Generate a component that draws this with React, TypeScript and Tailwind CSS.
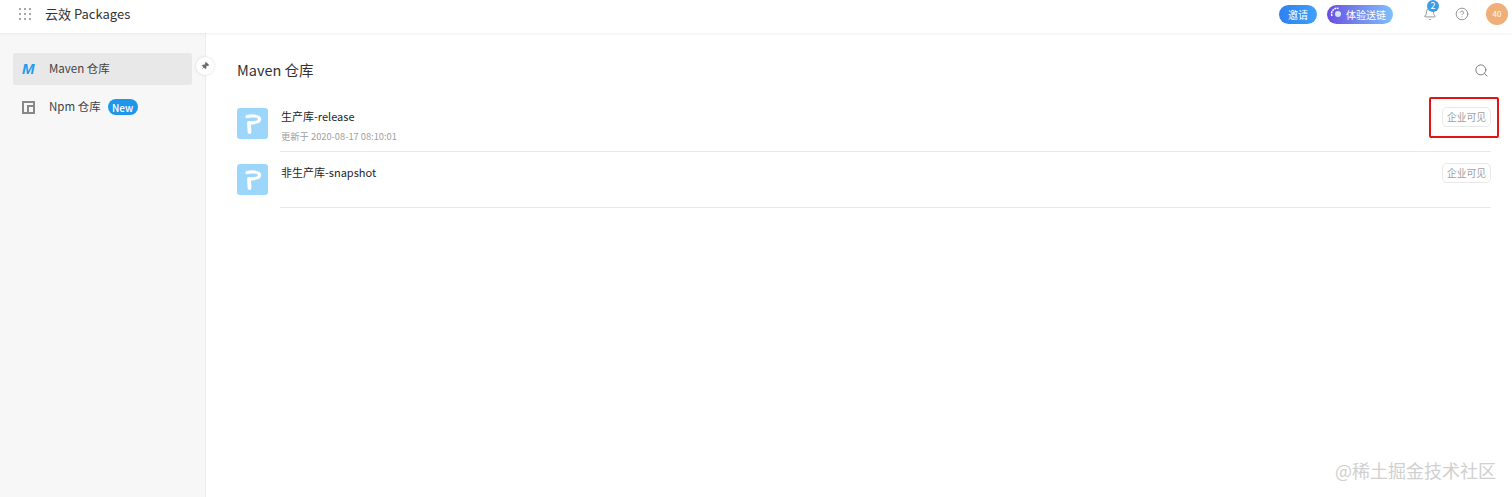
import React from "react";
import { Search, Pin, Bell, CircleHelp } from "lucide-react";

const FONT = '"Noto Sans CJK SC", "Noto Sans", sans-serif';

const RepoLogo = () => (
  <div className="w-[31px] h-[31px] rounded-[3px] bg-[#9dd6fb] flex-shrink-0">
    <svg width="31" height="31" viewBox="0 0 31 31" fill="none">
      <path d="M10 8.500c4-1 11.500-1 12.500 2c.6 3-4 4.500-9 4.500" stroke="#fff" strokeWidth="3.200" strokeLinecap="round" />
      <path d="M12 15l.5 9" stroke="#fff" strokeWidth="3.800" strokeLinecap="round" />
    </svg>
  </div>
);

const VisibleTag = () => (
  <span className="h-[20px] w-[49px] flex items-center justify-center rounded-[5px] border border-[#e8e8e8] text-[9.800px] text-[#a0a0a0] bg-white">
    企业可见
  </span>
);

interface RepoRowProps {
  name: string;
  updated?: string;
}

const RepoRow: React.FC<RepoRowProps> = ({ name, updated }) => (
  <div className="flex h-[56px] pt-[12px]">
    <RepoLogo />
    <div className="flex-1 ml-[12px] -mt-[2px] border-b border-[#e8e8e8] flex justify-between">
      <div className="pt-[2px] pl-[1px]">
        <p className="text-[11px] leading-[16px] text-[#262626]">{name}</p>
        {updated && <p className="text-[9.300px] leading-[14px] mt-[5px] text-[#a0a0a0]">{updated}</p>}
      </div>
      <div className="pt-[1px]">
        <VisibleTag />
      </div>
    </div>
  </div>
);

export default function App() {
  return (
    <div className="relative h-[497px] w-[1512px] overflow-hidden bg-white flex flex-col" style={{ fontFamily: FONT }}>
      {/* Top bar */}
      <header className="h-[33px] pb-[5px] flex items-center justify-between pl-[19px] pr-[4px] bg-white shadow-[0_1px_3px_rgba(0,0,0,0.06)] z-10 flex-shrink-0">
        <div className="flex items-center">
          <div className="grid grid-cols-3 gap-[3px]">
            {Array.from({ length: 9 }).map((_, i) => (
              <span key={i} className="w-[2px] h-[2px] bg-[#a8a8a8]" />
            ))}
          </div>
          <span className="ml-[14px] text-[13px] text-[#333]">云效 Packages</span>
        </div>
        <div className="flex items-center">
          <span className="w-[38px] h-[19px] rounded-full bg-gradient-to-r from-[#2f80f0] to-[#3fa0f8] text-white text-[10px] flex items-center justify-center">
            邀请
          </span>
          <span className="ml-[10px] w-[66px] h-[19px] rounded-full bg-gradient-to-r from-[#6a4de0] to-[#7cc0fa] text-white text-[10px] flex items-center pl-[3px]">
            <svg width="14" height="14" viewBox="0 0 14 14" className="mr-[2px] flex-shrink-0">
              <circle cx="8" cy="7" r="3" fill="#cfe6ff" />
              <path d="M2 9A5.500 5.500 0 0 1 8.500 1.500" stroke="#fff" strokeWidth="1.500" fill="none" strokeDasharray="2 .7" />
            </svg>
            体验送链
          </span>
          <div className="relative ml-[30px] w-[14px] h-[14px]">
            <Bell size={14} strokeWidth={1.3} className="text-[#777]" />
            <span className="absolute -top-[7px] left-[4px] w-[12px] h-[12px] rounded-full bg-[#3b9de8] text-white text-[9px] leading-[12px] text-center">
              2
            </span>
          </div>
          <CircleHelp size={14} strokeWidth={1.3} className="ml-[18px] text-[#777]" />
          <span className="ml-[17px] w-[22px] h-[22px] rounded-full bg-[#f0ae78] text-white text-[8px] flex items-center justify-center">
            40
          </span>
        </div>
      </header>

      <div className="flex flex-1 min-h-0">
        {/* Sidebar */}
        <aside className="relative w-[206px] flex-shrink-0 bg-[#f7f7f7] border-r border-[#eeeeee] pt-[20px] pl-[13px] pr-[13px]">
          <div className="h-[32px] rounded-[2px] bg-[#e8e8e8] flex items-center pl-[9px]">
            <span className="w-[14px] text-[15px] font-bold italic text-[#1e9bf0]" style={{ fontFamily: '"Liberation Sans", sans-serif' }}>M</span>
            <span className="ml-[13px] text-[11.500px] text-[#444]">Maven 仓库</span>
          </div>
          <div className="h-[32px] mt-[6px] flex items-center pl-[9px]">
            <span className="w-[13px] h-[13px] border-2 border-[#888] flex justify-end items-end">
              <span className="w-[6px] h-[7px] border-l-2 border-t-2 border-[#888]" />
            </span>
            <span className="ml-[14px] text-[11.500px] text-[#444]">Npm 仓库</span>
            <span className="ml-[7px] w-[30px] h-[16px] rounded-full bg-[#1e96ea] text-white text-[10px] font-medium flex items-center justify-center">
              New
            </span>
          </div>
          <span className="absolute top-[24px] -right-[9px] w-[18px] h-[18px] rounded-full bg-white shadow-[0_0_3px_rgba(0,0,0,0.15)] flex items-center justify-center">
            <Pin size={8} className="text-[#666] rotate-45" fill="#666" />
          </span>
        </aside>

        {/* Content */}
        <main className="flex-1 pl-[31px] pr-[21px]">
          <div className="h-[53px] pt-[21px] flex items-center justify-between">
            <h1 className="text-[14.500px] text-[#333]">Maven 仓库</h1>
            <Search size={15} strokeWidth={1.6} className="text-[#808080] mr-[2px]" />
          </div>
          <div className="mt-[10px]">
            <RepoRow name="生产库-release" updated="更新于 2020-08-17 08:10:01" />
            <RepoRow name="非生产库-snapshot" />
          </div>
        </main>
      </div>

      {/* Annotation and watermark over the screenshot */}
      <div className="absolute left-[1429px] top-[97px] w-[70px] h-[41px] rounded-[2px] border-2 border-[#e01515]" />
      <span className="absolute right-[16px] top-[458px] text-[18px] leading-[24px] text-[#d0d0d0]">@稀土掘金技术社区</span>
    </div>
  );
}
